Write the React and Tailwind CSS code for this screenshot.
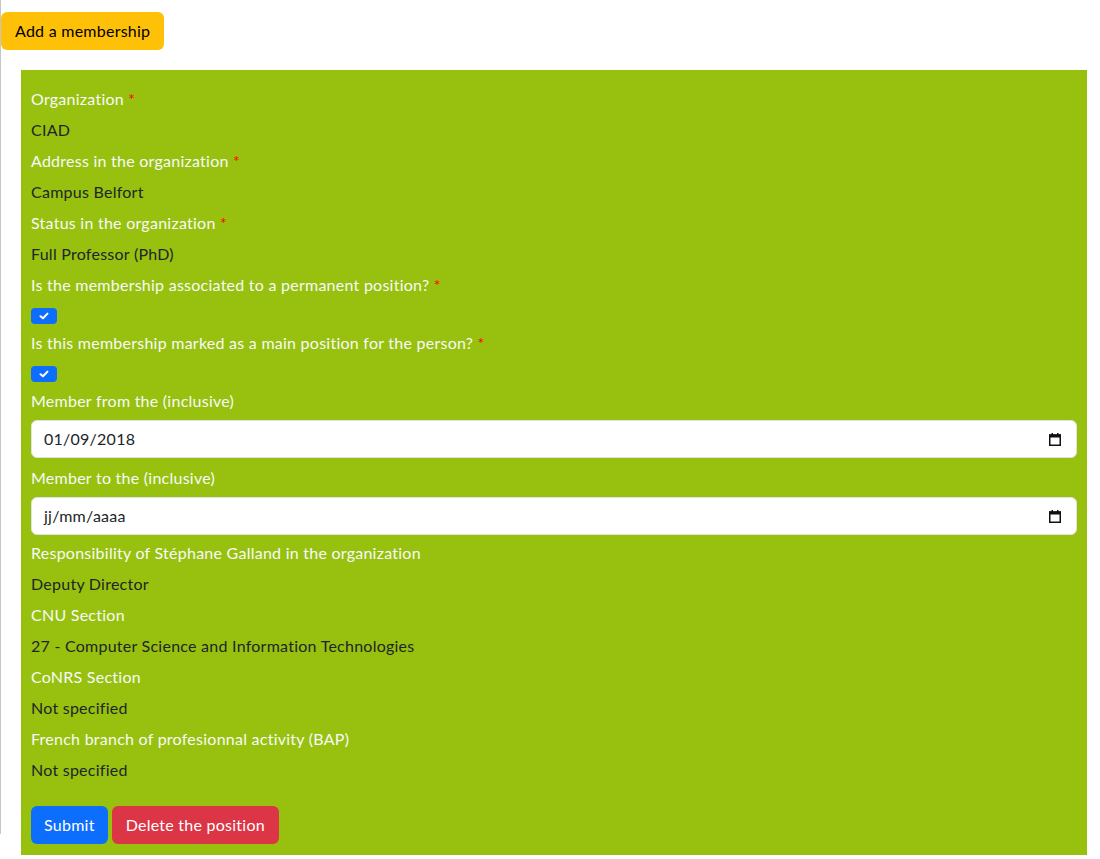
import React from "react";

const rows = [
  { label: "Organization", required: true, value: "CIAD" },
  { label: "Address in the organization", required: true, value: "Campus Belfort" },
  { label: "Status in the organization", required: true, value: "Full Professor (PhD)" },
];

const extra = [
  { label: "Responsibility of Stéphane Galland in the organization", value: "Deputy Director" },
  { label: "CNU Section", value: "27 - Computer Science and Information Technologies" },
  { label: "CoNRS Section", value: "Not specified" },
  { label: "French branch of profesionnal activity (BAP)", value: "Not specified" },
];

function Label({ children, required }) {
  return (
    <div className="h-6 leading-6 text-[#f8f9fa]">
      {children}
      {required && <span className="text-[#ff0000]"> *</span>}
    </div>
  );
}

function Value({ children }) {
  return <div className="h-6 leading-6 text-[#212529]">{children}</div>;
}

function Check() {
  return (
    <div className="flex h-6 items-center">
      <div className="flex h-4 w-[26px] items-center justify-center rounded-[4px] bg-[#0d6efd]">
        <svg width="10" height="8" viewBox="0 0 10 8">
          <path d="M1.5 4.2 L4 6.3 L8.5 1.6" fill="none" stroke="#fff" strokeWidth="2" strokeLinecap="round" strokeLinejoin="round" />
        </svg>
      </div>
    </div>
  );
}

function CalendarIcon() {
  return (
    <svg width="12" height="13" viewBox="0 0 12 13">
      <rect x="2.5" y="0" width="1.5" height="2" fill="#111" />
      <rect x="8" y="0" width="1.5" height="2" fill="#111" />
      <rect x="0" y="1.5" width="12" height="3" fill="#111" />
      <rect x="0.75" y="2" width="10.5" height="10.25" fill="none" stroke="#111" strokeWidth="1.5" />
    </svg>
  );
}

function DateField({ value }) {
  return (
    <div className="flex h-[38px] items-center justify-between rounded-[6px] border border-[#dee2e6] bg-white pl-3 pr-[15px] text-[#212529]">
      <span>{value}</span>
      <CalendarIcon />
    </div>
  );
}

export default function App() {
  return (
    <div
      className="h-[859px] bg-white text-base tracking-[0.25px]"
      style={{ fontFamily: "Lato, 'Open Sans', sans-serif" }}
    >
      <div className="h-[834px] border-l border-[#c6c6c6]">
        <div className="flex pt-3">
          <button className="h-[38px] rounded-[6px] bg-[#ffc107] px-[14px] text-[#000]">
            Add a membership
          </button>
        </div>
        <div className="mt-5 ml-5 mr-[13px] bg-[#97c10e] px-[10px] pt-[17px] pb-[11px]">
          <div className="flex flex-col gap-[7px]">
            {rows.map((r) => (
              <React.Fragment key={r.label}>
                <Label required={r.required}>{r.label}</Label>
                <Value>{r.value}</Value>
              </React.Fragment>
            ))}
            <Label required>Is the membership associated to a permanent position?</Label>
          </div>
          <div className="mt-[7px]">
            <Check />
          </div>
          <div className="mt-[3px]">
            <Label required>Is this membership marked as a main position for the person?</Label>
          </div>
          <div className="mt-[7px]">
            <Check />
          </div>
          <div className="mt-[3px]">
            <Label>Member from the (inclusive)</Label>
          </div>
          <div className="mt-[7px]">
            <DateField value="01/09/2018" />
          </div>
          <div className="mt-2">
            <Label>Member to the (inclusive)</Label>
          </div>
          <div className="mt-[7px]">
            <DateField value="jj/mm/aaaa" />
          </div>
          <div className="mt-[6px] flex flex-col gap-[7px]">
            {extra.map((r) => (
              <React.Fragment key={r.label}>
                <Label>{r.label}</Label>
                <Value>{r.value}</Value>
              </React.Fragment>
            ))}
          </div>
          <div className="mt-6 flex gap-1">
            <button className="h-[38px] rounded-[6px] bg-[#0d6efd] px-[13px] text-white">
              Submit
            </button>
            <button className="h-[38px] rounded-[6px] bg-[#dc3545] px-[14px] text-white">
              Delete the position
            </button>
          </div>
        </div>
      </div>
    </div>
  );
}
